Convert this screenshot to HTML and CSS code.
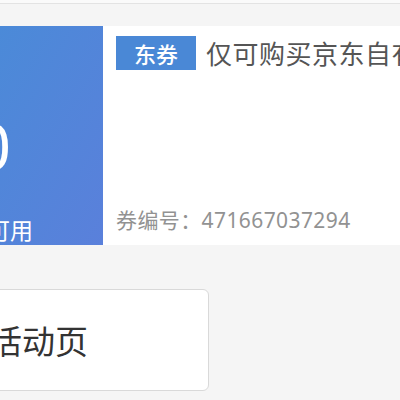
FILE: index.html
```html
<!DOCTYPE html>
<html lang="zh-CN">
<head>
<meta charset="utf-8">
<link rel="stylesheet" href="styles.css">
</head>
<body>
<div class="topbar"></div>
<div class="coupon">
  <div class="coupon-left">
    <div class="amount">¥100</div>
    <div class="cond">满199可用</div>
  </div>
  <div class="coupon-right">
    <div class="title-row">
      <span class="tag">东券</span>
      <span class="title">仅可购买京东自有品牌商品</span>
    </div>
    <div class="code">券编号：471667037294</div>
  </div>
</div>
<div class="btn-row">
  <div class="btn"><span>进入活动页</span></div>
</div>
</body>
</html>
```

FILE: styles.css
```css
html, body {
  margin: 0;
  padding: 0;
  background: #f5f5f5;
  font-family: "Noto Sans", "Noto Sans CJK SC", sans-serif;
  overflow: hidden;
  width: 400px;
  height: 400px;
}
.topbar {
  height: 3px;
  background: #fafafa;
  border-bottom: 1px solid #e3e3e3;
}
.coupon {
  margin-top: 22px;
  height: 219px;
  display: flex;
  background: #fff;
}
.coupon-left {
  flex: 0 0 103px;
  background: linear-gradient(120deg, #4b8ad8 0%, #5a80db 100%);
  color: #fff;
  display: flex;
  flex-direction: column;
  align-items: flex-end;
  overflow: hidden;
  white-space: nowrap;
}
.amount {
  font-size: 64px;
  line-height: 64px;
  margin-top: 88px;
  margin-right: 92px;
}
.cond {
  font-family: "Noto Sans CJK SC", sans-serif;
  font-size: 23px;
  line-height: 26px;
  margin-top: auto;
  margin-bottom: 3px;
  margin-right: 70px;
}
.coupon-right {
  flex: 1;
  min-width: 0;
  padding: 10px 0 0 13px;
  display: flex;
  flex-direction: column;
  white-space: nowrap;
  overflow: hidden;
}
.title-row {
  display: flex;
  align-items: center;
}
.tag {
  background: #4a88d6;
  color: #fff;
  font-family: "Noto Sans CJK SC", sans-serif;
  font-size: 22px;
  font-weight: 500;
  width: 80px;
  height: 34px;
  line-height: 34px;
  text-align: center;
  flex: 0 0 80px;
}
.title {
  margin-left: 10px;
  font-family: "Noto Sans CJK SC", sans-serif;
  font-size: 26px;
  letter-spacing: 0.5px;
  color: #555;
  line-height: 34px;
}
.code {
  margin-top: auto;
  margin-bottom: 11px;
  font-size: 21px;
  letter-spacing: 0.4px;
  color: #929292;
  line-height: 28px;
}
.btn-row {
  margin-top: 44px;
  display: flex;
}
.btn {
  margin-left: -200px;
  width: 409px;
  height: 102px;
  background: #fff;
  border: 1px solid #d9d9d9;
  border-radius: 6px;
  display: flex;
  align-items: center;
  justify-content: flex-end;
  padding-right: 120px;
  box-sizing: border-box;
}
.btn span {
  font-family: "Noto Sans CJK SC", sans-serif;
  font-size: 33px;
  color: #333;
  white-space: nowrap;
}
```
